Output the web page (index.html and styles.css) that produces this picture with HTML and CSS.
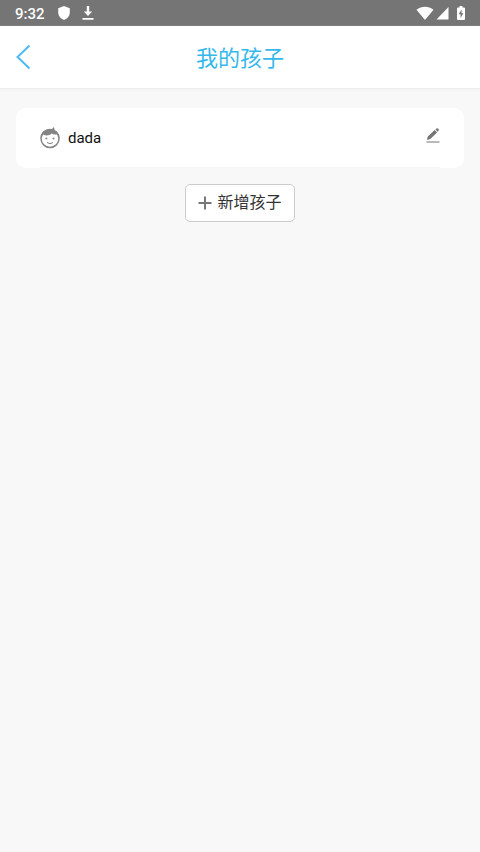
FILE: index.html
```html
<!DOCTYPE html>
<html lang="zh-CN">
<head>
<meta charset="utf-8">
<meta name="viewport" content="width=device-width, initial-scale=1">
<title>我的孩子</title>
<link rel="stylesheet" href="styles.css">
</head>
<body>
<div class="status">
  <span class="time">9:32</span>
  <svg class="shield" width="14" height="16" viewBox="0 0 14 16"><path d="M7 1L12.800 3.200V7.500C12.800 11 10.500 13.500 7 15C3.500 13.500 1.200 11 1.200 7.500V3.200Z"/></svg>
  <svg class="download" width="12" height="16" viewBox="0 0 12 16"><path d="M4.800 1H7.200V6.500H10.200L6 11L1.800 6.500H4.800ZM.5 13H11.500V14.800H.5Z"/></svg>
  <svg class="wifi" width="18" height="14" viewBox="0 0 18 14"><path d="M.5 3.800C5.500-.2 12.500-.2 17.500 3.800L9 14Z"/></svg>
  <svg class="signal" width="13" height="14" viewBox="0 0 13 14"><path d="M12.500 1V13.500H.5Z"/></svg>
  <svg class="battery" width="8" height="14" viewBox="0 0 8 14"><path d="M2.500 0H5.500V1.500H7Q8 1.500 8 2.500V13Q8 14 7 14H1Q0 14 0 13V2.500Q0 1.500 1 1.500H2.500Z"/><path class="bolt" d="M4.600 3.600L1.700 8.300H3.600V12L6.400 7.200H4.600Z"/></svg>
</div>
<header class="header">
  <a class="back" href="#" aria-label="返回"><svg width="16" height="26" viewBox="0 0 16 26"><path d="M14.500 1.500L2.500 13L14.500 24.500"/></svg></a>
  <h1>我的孩子</h1>
</header>
<main class="content">
  <ul class="list">
    <li class="child">
      <svg class="face" width="20" height="22" viewBox="0 0 20 22">
        <circle cx="10" cy="11.500" r="9"/>
        <path class="hair" d="M.8 10.500C1 5 5.500 2.200 10 2.200C11.800 2.200 13 1.500 13.500 0C14.500 1 14.700 2 14.500 3.200C17.500 4.800 19 7.300 19.200 10.500L17 7.300C15 7.800 13 7.500 11.500 6.500C9 9 5.500 8.800 3.200 7.500Z"/>
        <circle class="eye" cx="6.400" cy="11.500" r="1"/><circle class="eye" cx="13.600" cy="11.500" r="1"/>
        <path class="smile" d="M7 15.500Q10 18 13 15.500"/>
      </svg>
      <span class="name">dada</span>
      <button class="edit" aria-label="编辑"><svg width="14" height="16" viewBox="0 0 14 16"><path d="M1.800 8.600L8.700 2.100L11.100 4.400L4.300 11L.8 12ZM9.400 1.500L10.500 .5Q11.200 0 11.900 .6L12.600 1.300Q13.200 2 12.600 2.700L11.700 3.700ZM.5 13.500H13.500V14.600H.5Z"/></svg></button>
    </li>
  </ul>
  <button class="add"><svg width="14" height="14" viewBox="0 0 14 14"><path d="M7 .5V13.500M.5 7H13.500"/></svg>新增孩子</button>
</main>
</body>
</html>
```
FILE: styles.css
```css
* { box-sizing: border-box; }
body {
  margin: 0;
  min-height: 100vh;
  display: flex;
  flex-direction: column;
  background: #f8f8f8;
  color: #111;
  font-family: Roboto, "Noto Sans CJK SC", sans-serif;
}
svg { display: block; flex: none; }
button { font: inherit; cursor: pointer; }
.status {
  height: 26px;
  display: flex;
  align-items: center;
  padding: 0 15px;
  background: #757575;
  color: #fff;
}
.status svg { fill: #fff; }
.status .bolt { fill: #757575; }
.time { font-size: 15px; line-height: 24px; font-weight: 500; padding-top: 2px; }
.shield { margin-left: 12px; }
.download { margin-left: 11px; }
.wifi { margin-left: auto; }
.signal { margin-left: 2px; }
.battery { margin-left: 8px; }
.header {
  height: 63px;
  display: grid;
  grid-template-columns: 48px 1fr 48px;
  align-items: center;
  background: #fff;
  border-bottom: 1px solid #eee;
  box-shadow: 0 1px 2px #f0f0f0;
}
.back { padding-left: 15px; }
.back svg { fill: none; stroke: #4bbcf0; stroke-width: 2; }
h1 {
  margin: 0;
  padding-top: 4px;
  color: #35b9ec;
  font-size: 22px;
  line-height: 32px;
  font-weight: 400;
  text-align: center;
}
.content {
  flex: 1;
  display: flex;
  flex-direction: column;
  align-items: center;
  gap: 16px;
  padding: 19px 16px;
}
.list {
  width: 100%;
  margin: 0;
  padding: 0 24px;
  list-style: none;
  background: #fff;
  border-radius: 10px;
}
.child {
  height: 60px;
  display: flex;
  align-items: center;
  gap: 8px;
  border-bottom: 1px solid #f5f5f5;
}
.face { fill: none; stroke: #858585; stroke-width: 1.5; }
.face .hair, .face .eye { fill: #858585; stroke: none; }
.face .smile { stroke-width: 1; }
.name { font-size: 15px; line-height: 24px; }
.edit { margin-left: auto; padding: 0 0 4px; border: 0; background: none; }
.edit svg { fill: #757575; }
.add {
  height: 38px;
  display: flex;
  align-items: center;
  gap: 5px;
  padding: 0 12px;
  background: #fff;
  border: 1px solid #ccc;
  border-radius: 5px;
  color: #333;
  font-size: 16px;
  line-height: 24px;
}
.add svg { fill: none; stroke: #777; stroke-width: 2; }
```
